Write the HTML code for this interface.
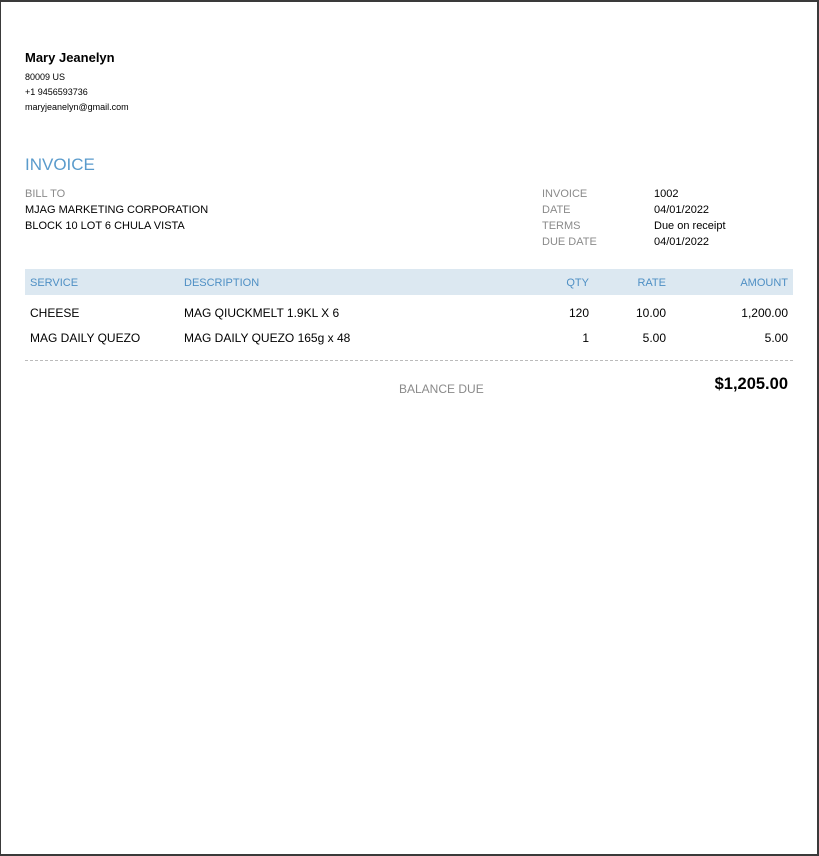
<!DOCTYPE html>
<html><head><meta charset="utf-8"><style>
html,body{margin:0;padding:0;}
body{width:819px;height:856px;position:relative;background:#fff;font-family:"Liberation Sans",Arial,sans-serif;color:#000;overflow:hidden;}
.frame{position:absolute;left:0;top:0;width:819px;height:856px;box-sizing:border-box;border-top:2px solid #3a3a3a;border-left:1px solid #3a3a3a;border-right:2px solid #3a3a3a;border-bottom:2px solid #3a3a3a;}
.a{position:absolute;white-space:nowrap;}
.g{color:#8a8a8a;font-size:11px;}
.s{font-size:11px;}
.h{color:#4e8fc4;font-size:11px;}
</style></head><body>
<div class="frame"></div>
<div class="a" style="left:25px;top:50px;font-size:13px;font-weight:bold;">Mary Jeanelyn</div>
<div class="a" style="left:25px;top:72px;font-size:9px;">80009 US</div>
<div class="a" style="left:25px;top:87px;font-size:9px;">+1 9456593736</div>
<div class="a" style="left:25px;top:102px;font-size:9px;">maryjeanelyn@gmail.com</div>
<div class="a" style="left:25px;top:155px;font-size:17px;color:#5a9bcc;">INVOICE</div>
<div class="a g" style="left:25px;top:188px;">BILL TO</div>
<div class="a s" style="left:25px;top:204px;">MJAG MARKETING CORPORATION</div>
<div class="a s" style="left:25px;top:220px;">BLOCK 10 LOT 6 CHULA VISTA</div>
<div class="a g" style="left:542px;top:188px;">INVOICE</div>
<div class="a g" style="left:542px;top:204px;">DATE</div>
<div class="a g" style="left:542px;top:220px;">TERMS</div>
<div class="a g" style="left:542px;top:236px;">DUE DATE</div>
<div class="a s" style="left:654px;top:188px;">1002</div>
<div class="a s" style="left:654px;top:204px;">04/01/2022</div>
<div class="a s" style="left:654px;top:220px;">Due on receipt</div>
<div class="a s" style="left:654px;top:236px;">04/01/2022</div>
<div class="a" style="left:25px;top:269px;width:768px;height:26px;background:#dce8f1;"></div>
<div class="a h" style="left:30px;top:277px;">SERVICE</div>
<div class="a h" style="left:184px;top:277px;">DESCRIPTION</div>
<div class="a h" style="right:230px;top:277px;">QTY</div>
<div class="a h" style="right:153px;top:277px;">RATE</div>
<div class="a h" style="right:31px;top:277px;">AMOUNT</div>
<div class="a" style="left:30px;top:306px;font-size:12px;">CHEESE</div>
<div class="a" style="left:184px;top:306px;font-size:12px;">MAG QIUCKMELT 1.9KL X 6</div>
<div class="a" style="right:230px;top:306px;font-size:12px;">120</div>
<div class="a" style="right:153px;top:306px;font-size:12px;">10.00</div>
<div class="a" style="right:31px;top:306px;font-size:12px;">1,200.00</div>
<div class="a" style="left:30px;top:331px;font-size:12px;">MAG DAILY QUEZO</div>
<div class="a" style="left:184px;top:331px;font-size:12px;">MAG DAILY QUEZO 165g x 48</div>
<div class="a" style="right:230px;top:331px;font-size:12px;">1</div>
<div class="a" style="right:153px;top:331px;font-size:12px;">5.00</div>
<div class="a" style="right:31px;top:331px;font-size:12px;">5.00</div>
<div class="a" style="left:25px;top:360px;width:768px;border-top:1px dashed #bbb;"></div>
<div class="a" style="left:399px;top:382px;font-size:12px;color:#8a8a8a;">BALANCE DUE</div>
<div class="a" style="right:31px;top:375px;font-size:16.5px;font-weight:bold;">$1,205.00</div>
</body></html>
